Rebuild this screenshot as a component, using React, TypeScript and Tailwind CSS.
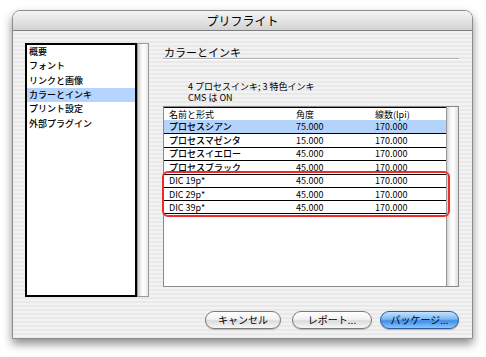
import React from 'react';

type InkRow = {
  name: string;
  angle: string;
  lpi: string;
};

const sections = ['概要', 'フォント', 'リンクと画像', 'カラーとインキ', 'プリント設定', '外部プラグイン'];

const inks: InkRow[] = [
  { name: 'プロセスシアン', angle: '75.000', lpi: '170.000' },
  { name: 'プロセスマゼンタ', angle: '15.000', lpi: '170.000' },
  { name: 'プロセスイエロー', angle: '45.000', lpi: '170.000' },
  { name: 'プロセスブラック', angle: '45.000', lpi: '170.000' },
  { name: 'DIC 19p*', angle: '45.000', lpi: '170.000' },
  { name: 'DIC 29p*', angle: '45.000', lpi: '170.000' },
  { name: 'DIC 39p*', angle: '45.000', lpi: '170.000' },
];

const font = "font-['Lucida_Grande','Noto_Sans_CJK_JP',sans-serif]";

function Scrollbar({ framed }: { framed?: boolean }) {
  return (
    <div
      className={`h-full w-[12px] border-l border-[#9a9a9a] bg-[linear-gradient(90deg,#cfcfcf_0px,#f4f4f4_3px,#ffffff_6px,#ececec_9px,#d6d6d6_12px)] ${
        framed ? 'border-y border-r' : ''
      }`}
    />
  );
}

function PillButton({ label, width, primary }: { label: string; width: string; primary?: boolean }) {
  return (
    <button
      className={`flex h-[18px] items-center justify-center rounded-full text-[10px] leading-none text-black ${width} ${
        primary
          ? 'border border-[#2c5d9e] bg-[linear-gradient(180deg,#c4e2ff_0%,#7ab8f5_45%,#3f8de6_55%,#8cc6ff_100%)] shadow-[0_1px_1px_rgba(0,0,0,0.25)]'
          : 'border border-[#7b7b7b] bg-[linear-gradient(180deg,#ffffff_0%,#f2f2f2_45%,#dcdcdc_55%,#f7f7f7_100%)] shadow-[0_1px_1px_rgba(0,0,0,0.2)]'
      }`}
    >
      {label}
    </button>
  );
}

export default function App() {
  return (
    <div className={`h-[357px] w-[486px] overflow-hidden bg-white pl-[12px] pt-[10px] ${font}`}>
      <div className="flex h-[329px] w-[461px] flex-col overflow-hidden rounded-t-[8px] border border-[#8e8e8e] shadow-[0_5px_10px_rgba(0,0,0,0.45)]">
        {/* title bar */}
        <div className="flex h-[20px] shrink-0 items-center justify-center border-b border-[#7d7d7d] bg-[linear-gradient(180deg,#f4f4f4_0%,#e4e4e4_50%,#d3d3d3_100%)] text-[12px] leading-none text-black">
          プリフライト
        </div>

        <div className="flex flex-1 flex-col bg-[repeating-linear-gradient(180deg,#f2f2f2_0px,#f2f2f2_2px,#e9e9e9_2px,#e9e9e9_4px)] pl-[12px] pr-[13px] pt-[12px]">
          <div className="flex h-[254px] gap-[14px]">
            {/* section list */}
            <div className="flex h-full w-[124px]">
              <div className="flex-1 border-2 border-black bg-white">
                {sections.map((s) => (
                  <div
                    key={s}
                    className={`flex h-[14.3px] items-center pb-[1px] pl-[2px] text-[9px] font-medium leading-none text-black ${
                      s === 'カラーとインキ' ? 'bg-[#b5d5ff]' : ''
                    }`}
                  >
                    {s}
                  </div>
                ))}
              </div>
              <Scrollbar framed />
            </div>

            {/* right panel */}
            <div className="flex w-[296px] flex-col">
              <div className="h-[16px] border-b border-[#b3b3b3] pl-[1px] pt-[4px] text-[11px] leading-[11px] text-black shadow-[0_1px_0_#ffffff]">
                カラーとインキ
              </div>

              <div className="mt-[22px] pl-[25px] text-[9px] leading-[11px] text-black">
                <div>4 プロセスインキ; 3 特色インキ</div>
                <div>CMS は ON</div>
              </div>

              <div className="relative mt-[3px] flex h-[181px] border border-[#8a8a8a]">
                <div className="flex-1 border-t border-black bg-white">
                  <div className="flex h-[12px] items-center text-[9px] leading-none text-black">
                    <span className="w-[132px] pl-[5px]">名前と形式</span>
                    <span className="w-[79px]">角度</span>
                    <span>線数(lpi)</span>
                  </div>
                  {inks.map((ink, i) => (
                    <div
                      key={ink.name}
                      className={`flex h-[13.4px] items-center text-[9px] leading-none text-black ${
                        i === 0 ? 'bg-[#b4d3fa]' : 'border-t border-black'
                      } ${i === inks.length - 1 ? 'border-b' : ''}`}
                    >
                      <span className={`w-[132px] pl-[5px] ${i < 4 ? 'font-medium' : ''}`}>{ink.name}</span>
                      <span className="w-[79px]">{ink.angle}</span>
                      <span>{ink.lpi}</span>
                    </div>
                  ))}
                </div>
                <Scrollbar />

                {/* highlight around spot inks */}
                <div className="pointer-events-none absolute left-[-2px] top-[64px] h-[46px] w-[288px] rounded-[6px] border-2 border-[#ee2a2a]" />
              </div>
            </div>
          </div>

          {/* buttons */}
          <div className="mt-[14px] flex justify-end">
            <PillButton label="キャンセル" width="w-[76px]" />
            <div className="w-[11px]" />
            <PillButton label="レポート..." width="w-[80px]" />
            <div className="w-[8px]" />
            <PillButton label="パッケージ..." width="w-[79px]" primary />
          </div>
        </div>
      </div>
    </div>
  );
}
